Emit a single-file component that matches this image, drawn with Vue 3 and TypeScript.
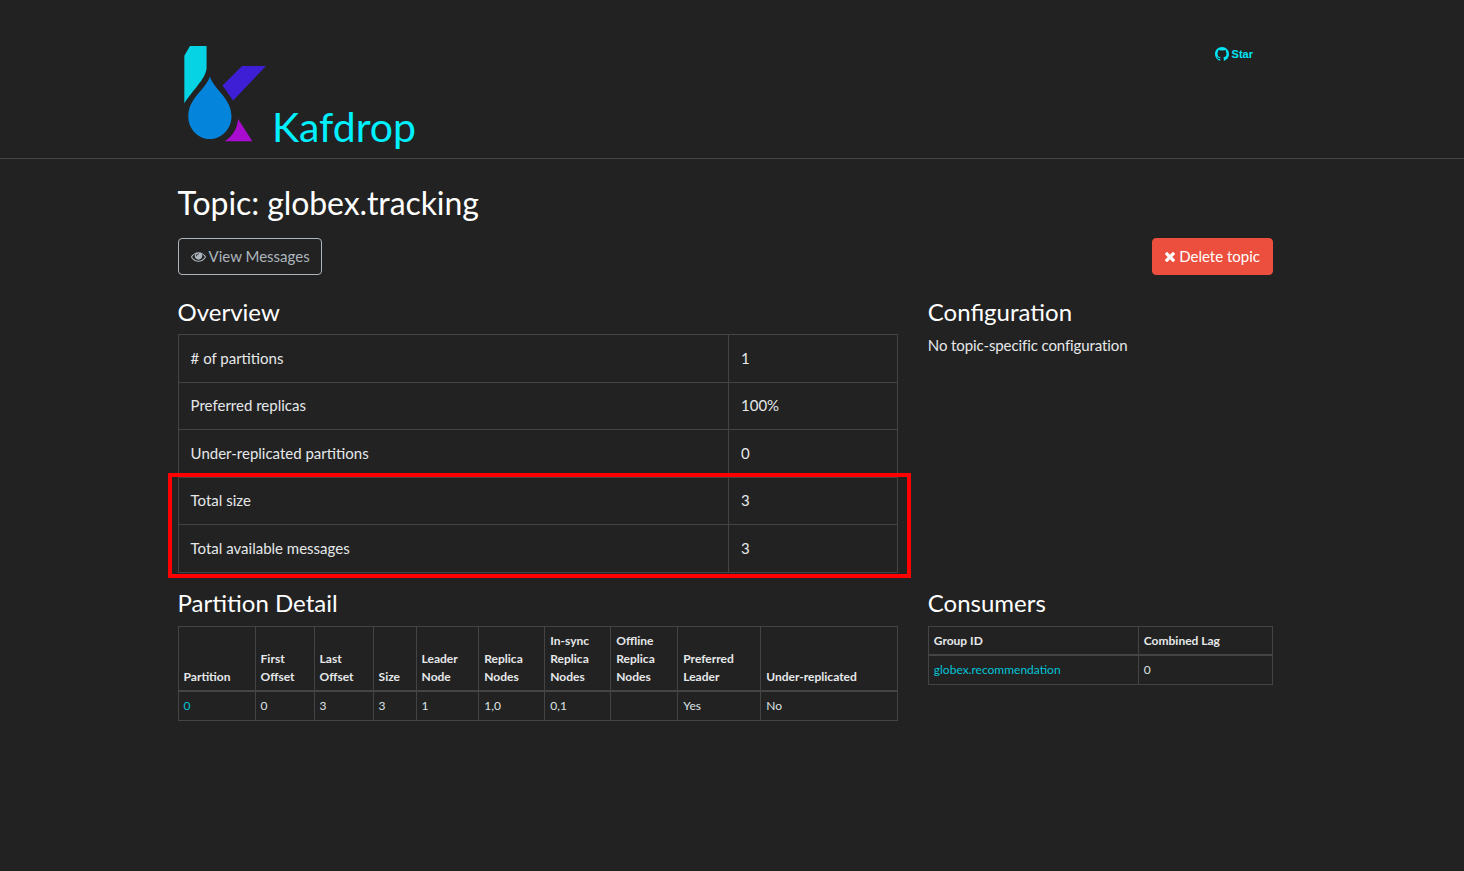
<template>
  <div class="page">
    <header class="site-header">
      <div class="header-inner">
        <a class="brand">
          <svg class="logo" viewBox="40 30 250 295" width="83" height="98">
            <path d="M58 33 L108 33 L108 100 C105 130 80 150 41 205 L41 62 Z" fill="#06d3e3" />
            <path d="M215 93 L287 93 L188 197 L156 152 Z" fill="#3f1fd6" />
            <path d="M203 253 L246 320 L163 320 C185 305 200 285 203 253 Z" fill="#a80ccf" />
            <path d="M118 125 C130 165 183 190 183 245 C183 285 150 313 118 313 C85 313 53 285 53 245 C53 190 105 165 118 125 Z" fill="#0584dc" />
          </svg>
          <span class="brand-name">Kafdrop</span>
        </a>
        <a class="star">
          <svg viewBox="0 0 16 16" width="14" height="14">
            <path fill="currentColor" d="M8 0C3.58 0 0 3.58 0 8c0 3.54 2.29 6.53 5.47 7.59.4.07.55-.17.55-.38 0-.19-.01-.82-.01-1.49-2.01.37-2.53-.49-2.69-.94-.09-.23-.48-.94-.82-1.13-.28-.15-.68-.52-.01-.53.63-.01 1.08.58 1.23.82.72 1.21 1.87.87 2.33.66.07-.52.28-.87.51-1.07-1.78-.2-3.64-.89-3.64-3.95 0-.87.31-1.59.82-2.15-.08-.2-.36-1.02.08-2.12 0 0 .67-.21 2.2.82.64-.18 1.32-.27 2-.27s1.36.09 2 .27c1.53-1.04 2.2-.82 2.2-.82.44 1.1.16 1.92.08 2.12.51.56.82 1.27.82 2.15 0 3.07-1.87 3.75-3.65 3.95.29.25.54.73.54 1.48 0 1.07-.01 1.93-.01 2.2 0 .21.15.46.55.38A8.01 8.01 0 0 0 16 8c0-4.42-3.58-8-8-8z" />
          </svg>
          <span>Star</span>
        </a>
      </div>
    </header>

    <main class="container">
      <h1 class="title">Topic: {{ topic }}</h1>

      <div class="actions">
        <button class="btn btn-outline">
          <svg class="icon" viewBox="0 0 1792 1792" width="15" height="15">
            <path fill="currentColor" d="M1664 960q-152-236-381-353 61 104 61 225 0 185-131.5 316.5t-316.5 131.5-316.5-131.5-131.5-316.5q0-121 61-225-229 117-381 353 133 205 333.5 326.5t434.5 121.5 434.5-121.5 333.5-326.5zm-720-384q0-20-14-34t-34-14q-125 0-214.5 89.5t-89.5 214.5q0 20 14 34t34 14 34-14 14-34q0-86 61-147t147-61q20 0 34-14t14-34zm848 384q0 34-20 69-140 230-376.5 368.5t-499.5 138.5-499.5-139-376.5-368q-20-35-20-69t20-69q140-229 376.5-368t499.5-139 499.5 139 376.5 368q20 35 20 69z" />
          </svg>
          View Messages
        </button>
        <button class="btn btn-danger">
          <svg class="icon icon-x" viewBox="192 0 1408 1792" width="12" height="15">
            <path fill="currentColor" d="M1490 1322q0 40-28 68l-136 136q-28 28-68 28t-68-28l-294-294-294 294q-28 28-68 28t-68-28l-136-136q-28-28-28-68t28-68l294-294-294-294q-28-28-28-68t28-68l136-136q28-28 68-28t68 28l294 294 294-294q28-28 68-28t68 28l136 136q28 28 28 68t-28 68l-294 294 294 294q28 28 28 68z" />
          </svg>
          Delete topic
        </button>
      </div>

      <div class="grid">
        <section>
          <h2>Overview</h2>
          <div class="overview-wrap">
            <table class="table overview">
              <tbody>
                <tr v-for="row in overview" :key="row.label">
                  <td class="ov-label">{{ row.label }}</td>
                  <td class="ov-value">{{ row.value }}</td>
                </tr>
              </tbody>
            </table>
            <div class="highlight"></div>
          </div>
        </section>

        <section>
          <h2>Configuration</h2>
          <p class="config-note">No topic-specific configuration</p>
        </section>

        <section>
          <h2>Partition Detail</h2>
          <table class="table small partitions">
            <thead>
              <tr>
                <th v-for="head in partitionHeads" :key="head.text" :class="head.cls">
                  <span v-for="line in head.text.split('|')" :key="line" class="th-line">{{ line }}</span>
                </th>
              </tr>
            </thead>
            <tbody>
              <tr>
                <td><a class="link">0</a></td>
                <td>0</td>
                <td>3</td>
                <td>3</td>
                <td>1</td>
                <td>1,0</td>
                <td>0,1</td>
                <td></td>
                <td>Yes</td>
                <td>No</td>
              </tr>
            </tbody>
          </table>
        </section>

        <section>
          <h2>Consumers</h2>
          <table class="table small">
            <thead>
              <tr>
                <th class="c-group">Group ID</th>
                <th>Combined Lag</th>
              </tr>
            </thead>
            <tbody>
              <tr>
                <td><a class="link">globex.recommendation</a></td>
                <td>0</td>
              </tr>
            </tbody>
          </table>
        </section>
      </div>
    </main>
  </div>
</template>

<script setup lang="ts">
const topic = 'globex.tracking'

const overview = [
  { label: '# of partitions', value: '1' },
  { label: 'Preferred replicas', value: '100%' },
  { label: 'Under-replicated partitions', value: '0' },
  { label: 'Total size', value: '3' },
  { label: 'Total available messages', value: '3' },
]

const partitionHeads = [
  { text: 'Partition', cls: 'p-1' },
  { text: 'First|Offset', cls: 'p-2' },
  { text: 'Last|Offset', cls: 'p-3' },
  { text: 'Size', cls: 'p-4' },
  { text: 'Leader|Node', cls: 'p-5' },
  { text: 'Replica|Nodes', cls: 'p-6' },
  { text: 'In-sync|Replica|Nodes', cls: 'p-7' },
  { text: 'Offline|Replica|Nodes', cls: 'p-8' },
  { text: 'Preferred|Leader', cls: 'p-9' },
  { text: 'Under-replicated', cls: 'p-10' },
]
</script>

<style>
html,
body {
  background: #222222;
}
</style>

<style scoped>
.page {
  min-height: 871px;
  background: #222222;
  color: #ffffff;
  font-family: Lato, "Liberation Sans", sans-serif;
  font-size: 15px;
  line-height: 1.5;
}

.site-header {
  height: 158px;
  border-bottom: 1px solid #444444;
  box-sizing: content-box;
}

.header-inner {
  width: 1095px;
  margin-left: 178px;
  display: flex;
  justify-content: space-between;
  align-items: flex-start;
}

.brand {
  display: flex;
  align-items: flex-end;
  margin-top: 45px;
  margin-left: 6px;
  height: 106px;
}

.logo {
  display: block;
  margin-bottom: 8px;
}

.brand-name {
  font-size: 41px;
  line-height: 48px;
  color: #00f0ff;
  margin-left: 5px;
}

.star {
  display: flex;
  align-items: center;
  gap: 3px;
  margin-top: 46px;
  margin-right: 20px;
  color: #00e5f5;
  font-family: "Liberation Sans", sans-serif;
  font-size: 11px;
  font-weight: 700;
  line-height: 16px;
}

.container {
  width: 1095.4px;
  margin-left: 177.6px;
}

.title {
  margin: 20px 0 0;
  font-size: 32px;
  font-weight: 400;
  line-height: 48px;
  letter-spacing: -0.09px;
}

.actions {
  display: flex;
  justify-content: space-between;
  margin-top: 11px;
}

.btn {
  height: 37px;
  padding: 0 12px 1px;
  border: 1px solid #adb5bd;
  border-radius: 4px;
  background: transparent;
  font-family: inherit;
  font-size: 15px;
  display: flex;
  align-items: center;
  gap: 3px;
}

.btn-outline {
  color: #adb5bd;
  padding-right: 11.4px;
}

.btn-danger {
  color: #ffffff;
  background: #ec4f3e;
  border-color: #ec4f3e;
}

.icon {
  display: block;
  flex: none;
}

.icon-x {
  margin-left: -1px;
}

.grid {
  display: grid;
  grid-template-columns: 720.2px 345.2px;
  column-gap: 30px;
  margin-top: 21px;
}

h2 {
  margin: 0 0 6.4px;
  font-size: 24px;
  font-weight: 400;
  line-height: 32px;
}

section:nth-child(n + 3) h2 {
  margin-top: 14.6px;
  margin-bottom: 7px;
}

.table {
  width: 100%;
  border-collapse: collapse;
}

.table td,
.table th {
  box-sizing: border-box;
  border: 1px solid #444444;
}

.overview td {
  padding: 11.5px 12px 12.5px;
  line-height: 22.5px;
  color: #e6e8ea;
}

.overview .ov-value {
  padding-left: 12.4px;
}

.ov-label {
  width: 550px;
}

.overview-wrap {
  position: relative;
}

.highlight {
  position: absolute;
  left: -9.6px;
  top: 139px;
  width: 743px;
  height: 105px;
  box-sizing: border-box;
  border: 4.5px solid #ff0000;
  pointer-events: none;
}

.config-note {
  margin: 0;
  color: #e6e8ea;
  letter-spacing: -0.1px;
}

.small {
  font-size: 12px;
  table-layout: fixed;
}

.small th {
  padding: 5px 5px 4px;
  font-weight: 700;
  text-align: left;
  vertical-align: bottom;
  line-height: 18px;
  border-bottom-width: 2px;
  color: #e6e8ea;
}

.small td {
  padding: 5px;
  line-height: 18px;
  color: #dee2e6;
}

.partitions th:nth-child(n + 6),
.partitions td:nth-child(n + 6) {
  padding-left: 5.7px;
}

.th-line {
  display: block;
}

.link {
  color: #00c4d8;
}

.p-1 { width: 77px; }
.p-2 { width: 59px; }
.p-3 { width: 59px; }
.p-4 { width: 43px; }
.p-5 { width: 62px; }
.p-6 { width: 66px; }
.p-7 { width: 66px; }
.p-8 { width: 67px; }
.p-9 { width: 83px; }

.c-group {
  width: 210px;
}
</style>
